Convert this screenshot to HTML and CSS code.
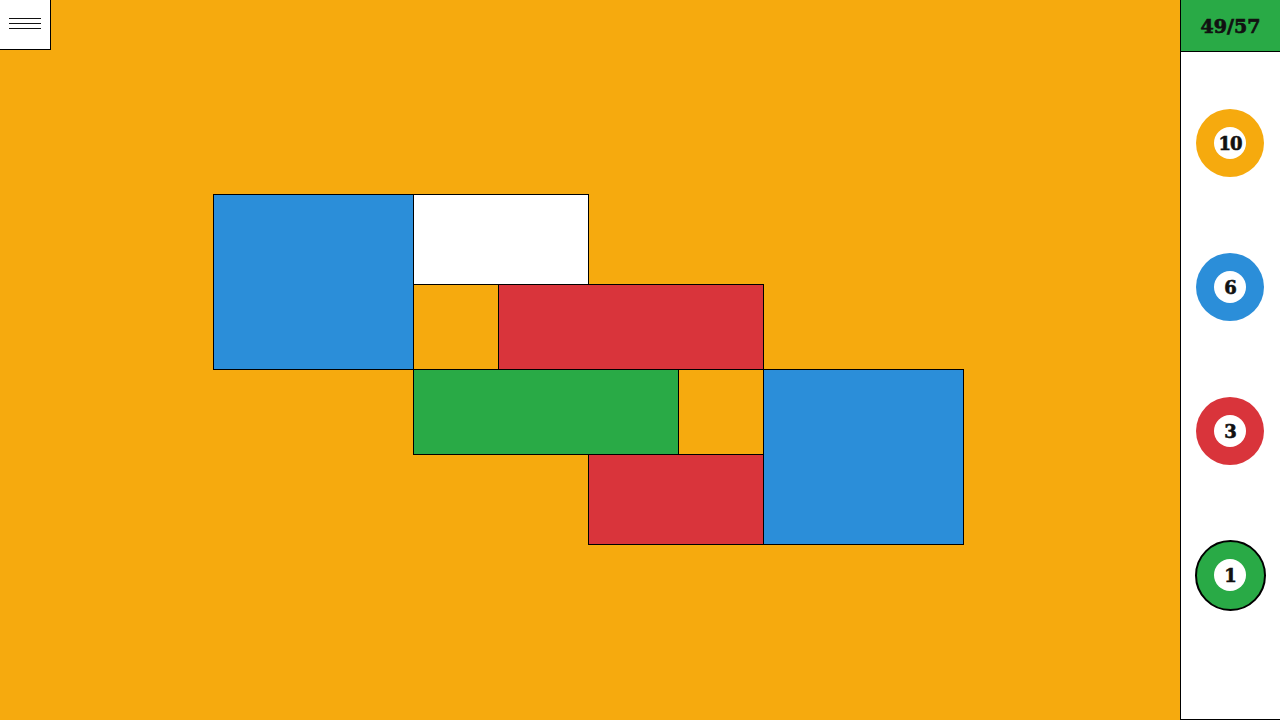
FILE: index.html
```html
<!DOCTYPE html>
<html>
<head>
<meta charset="utf-8">
<link rel="stylesheet" href="styles.css">
</head>
<body>
<div class="app">
  <main class="stage">
    <button class="menu" aria-label="menu">
      <span class="bar"></span><span class="bar"></span><span class="bar"></span>
    </button>
    <div class="board">
      <div class="piece blue p-b1"></div>
      <div class="piece white p-w"></div>
      <div class="piece red p-r1"></div>
      <div class="piece green p-g"></div>
      <div class="piece blue p-b2"></div>
      <div class="piece red p-r2"></div>
    </div>
  </main>
  <aside class="side">
    <div class="count">49/57</div>
    <div class="balls">
      <div class="slot"><div class="ball orange"><span class="num">10</span></div></div>
      <div class="slot"><div class="ball blue"><span class="num">6</span></div></div>
      <div class="slot"><div class="ball red"><span class="num">3</span></div></div>
      <div class="slot"><div class="ball green selected"><span class="num">1</span></div></div>
    </div>
  </aside>
</div>
</body>
</html>
```
FILE: styles.css
```css
html, body {
  margin: 0;
  padding: 0;
  width: 1280px;
  height: 720px;
  overflow: hidden;
}
.app {
  display: flex;
  width: 1280px;
  height: 720px;
}
.stage {
  position: relative;
  width: 1180px;
  height: 720px;
  background: #f6aa0e;
  box-sizing: border-box;
  padding: 194px 0 0 213px;
}
.menu {
  position: absolute;
  left: 0;
  top: 0;
  width: 51px;
  height: 50px;
  box-sizing: border-box;
  background: #fff;
  border: 0;
  border-right: 1px solid #000;
  border-bottom: 1px solid #000;
  padding: 18px 0 0 9px;
  margin: 0;
  display: flex;
  flex-direction: column;
  gap: 4px;
}
.bar {
  display: block;
  width: 32px;
  height: 1px;
  background: #111;
}
.board {
  display: grid;
  grid-template-columns: 200px 85px 90px 90px 85px 200px;
  grid-template-rows: 90px 85px 85px 90px;
  width: 750px;
  height: 350px;
}
.piece {
  border: 1px solid #000;
  margin: 0 -1px -1px 0;
}
.blue { background: #2b8ed9; }
.white { background: #fff; }
.red { background: #d9343b; }
.green { background: #29aa46; }
.orange { background: #f6aa0e; }
.p-b1 { grid-column: 1 / 2; grid-row: 1 / 3; }
.p-w { grid-column: 2 / 4; grid-row: 1 / 2; }
.p-r1 { grid-column: 3 / 6; grid-row: 2 / 3; }
.p-g { grid-column: 2 / 5; grid-row: 3 / 4; }
.p-b2 { grid-column: 6 / 7; grid-row: 3 / 5; }
.p-r2 { grid-column: 4 / 6; grid-row: 4 / 5; }

.side {
  width: 100px;
  height: 720px;
  box-sizing: border-box;
  border-left: 1px solid #000;
  border-bottom: 1px solid #000;
  background: #fff;
  display: flex;
  flex-direction: column;
}
.count {
  height: 52px;
  box-sizing: border-box;
  background: #29aa46;
  border-bottom: 1px solid #000;
  display: flex;
  align-items: center;
  justify-content: center;
  font-family: "DejaVu Serif", "Liberation Serif", serif;
  font-weight: bold;
  font-size: 19px;
  color: #111;
  padding-top: 1px;
  -webkit-text-stroke: 0.7px #111;
}
.balls {
  display: flex;
  flex-direction: column;
  padding-top: 19px;
}
.slot {
  height: 144px;
  display: flex;
  align-items: center;
  justify-content: center;
}
.ball {
  width: 68px;
  height: 68px;
  margin-left: -1px;
  border-radius: 50%;
  display: flex;
  align-items: center;
  justify-content: center;
  box-sizing: border-box;
}
.ball.selected {
  width: 71px;
  height: 71px;
  border: 2px solid #000;
}
.num {
  width: 32px;
  height: 32px;
  border-radius: 50%;
  background: #fff;
  display: flex;
  align-items: center;
  justify-content: center;
  font-family: "DejaVu Serif", "Liberation Serif", serif;
  font-weight: bold;
  font-size: 18px;
  color: #111;
  letter-spacing: -1px;
  -webkit-text-stroke: 0.6px #111;
}
```
